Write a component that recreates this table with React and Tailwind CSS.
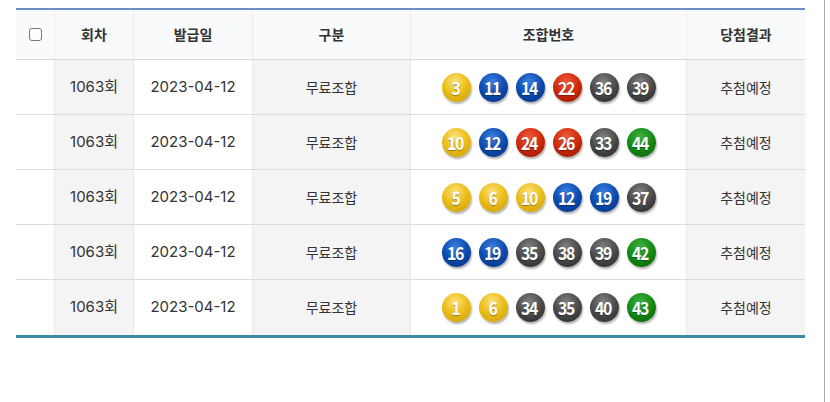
import React from "react";

const rows = [
  [3, 11, 14, 22, 36, 39],
  [10, 12, 24, 26, 33, 44],
  [5, 6, 10, 12, 19, 37],
  [16, 19, 35, 38, 39, 42],
  [1, 6, 34, 35, 40, 43],
];

function ballClass(n) {
  if (n <= 10) return "bg-[radial-gradient(circle_at_45%_30%,#fbe27a_0%,#ecbf1c_45%,#c99a06_100%)]";
  if (n <= 20) return "bg-[radial-gradient(circle_at_45%_30%,#3a7fe0_0%,#0c4bb0_50%,#05307a_100%)]";
  if (n <= 30) return "bg-[radial-gradient(circle_at_45%_30%,#f05a3a_0%,#cc2a0c_50%,#8c1400_100%)]";
  if (n <= 40) return "bg-[radial-gradient(circle_at_45%_30%,#808080_0%,#4a4a4a_50%,#262626_100%)]";
  return "bg-[radial-gradient(circle_at_45%_30%,#3fb03f_0%,#148a14_50%,#0a5a0a_100%)]";
}

function Ball({ n }) {
  return (
    <span
      className={`w-[29px] h-[29px] rounded-full flex items-center justify-center text-white text-[18px] font-semibold tracking-[-1.5px] shadow-[1px_2px_2px_rgba(0,0,0,0.3)] [text-shadow:0_1px_1px_rgba(0,0,0,0.35)] ${ballClass(n)}`}
      style={{ fontFamily: "'Noto Sans CJK KR', 'Noto Sans', sans-serif" }}
    >
      <span className="-ml-[1px] inline-block scale-x-[0.88]">{n}</span>
    </span>
  );
}

const cols = "grid grid-cols-[39px_79px_119px_158px_276px_118px]";

export default function App() {
  return (
    <div
      className="w-[830px] h-[402px] bg-white flex"
      style={{ fontFamily: "Inter, 'Noto Sans CJK KR', 'Noto Sans', sans-serif" }}
    >
      <div className="w-[825px] h-full border-r border-[#a8a8a8] pl-[16px] pt-[8px]">
        <div className="w-[789px] border-t-2 border-[#6f8ec3] border-b-[3px] border-b-[#3f88a2]">
          <div className={`${cols} h-[50px] bg-[#f9fafc] border-b border-[#d9d9d9] text-[14px] font-bold text-[#333]`}>
            <div className="flex items-center justify-center border-r border-[#ececec]">
              <span className="w-[13px] h-[13px] rounded-[3px] border border-[#777] bg-white"></span>
            </div>
            <div className="flex items-center justify-center border-r border-[#ececec]">회차</div>
            <div className="flex items-center justify-center border-r border-[#ececec]">발급일</div>
            <div className="flex items-center justify-center border-r border-[#ececec]">구분</div>
            <div className="flex items-center justify-center border-r border-[#ececec]">조합번호</div>
            <div className="flex items-center justify-center">당첨결과</div>
          </div>
          {rows.map((r, i) => (
            <div
              key={i}
              className={`${cols} h-[55px] text-[15px] text-[#333] ${i < rows.length - 1 ? "border-b border-[#dcdcdc]" : ""}`}
            >
              <div className="bg-white border-r border-[#e8e8e8]"></div>
              <div className="bg-[#f4f4f4] border-r border-[#e8e8e8] flex items-center justify-center">1063회</div>
              <div className="bg-white border-r border-[#e8e8e8] flex items-center justify-center">2023-04-12</div>
              <div className="bg-[#f4f4f4] border-r border-[#e8e8e8] flex items-center justify-center text-[14px]">무료조합</div>
              <div className="bg-white border-r border-[#e8e8e8] flex items-center justify-center gap-[8px]">
                {r.map((n, j) => (
                  <Ball key={j} n={n} />
                ))}
              </div>
              <div className="bg-[#f4f4f4] flex items-center justify-center text-[14px]">추첨예정</div>
            </div>
          ))}
        </div>
      </div>
    </div>
  );
}
